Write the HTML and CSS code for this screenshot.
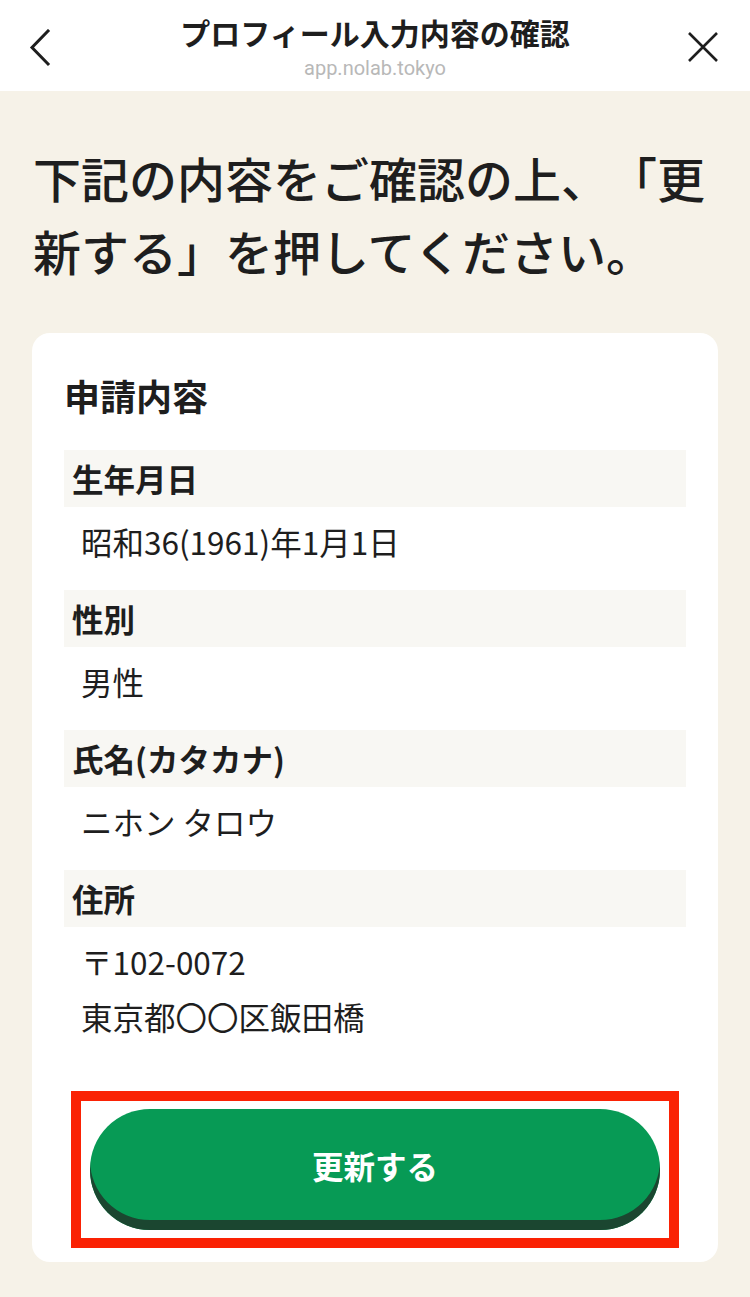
FILE: index.html
```html
<!DOCTYPE html>
<html lang="ja">
<head>
<meta charset="utf-8">
<title>プロフィール入力内容の確認</title>
<link rel="stylesheet" href="styles.css">
</head>
<body>
<header class="topbar">
  <button class="nav-btn back" aria-label="戻る">
    <svg width="24" height="38" viewBox="0 0 24 38"><polyline points="19,2 3,18.5 19,35" fill="none" stroke="#1e1e1e" stroke-width="3" stroke-linecap="square"/></svg>
  </button>
  <div class="topbar-text">
    <div class="topbar-title">プロフィール入力内容の確認</div>
    <div class="topbar-url">app.nolab.tokyo</div>
  </div>
  <button class="nav-btn close" aria-label="閉じる">
    <svg width="32" height="32" viewBox="0 0 32 32"><path d="M2 2 L30 30 M30 2 L2 30" fill="none" stroke="#1e1e1e" stroke-width="2.6"/></svg>
  </button>
</header>
<main class="page">
  <h1 class="lead">下記の内容をご確認の上、「更新する」を押してください。</h1>
  <section class="card">
    <h2 class="card-title">申請内容</h2>
    <dl class="fields">
      <dt class="field-label">生年月日</dt>
      <dd class="field-value">昭和36(1961)年1月1日</dd>
      <dt class="field-label">性別</dt>
      <dd class="field-value">男性</dd>
      <dt class="field-label">氏名(カタカナ)</dt>
      <dd class="field-value">ニホン タロウ</dd>
      <dt class="field-label">住所</dt>
      <dd class="field-value">〒102-0072<br>東京都〇〇区飯田橋</dd>
    </dl>
    <div class="highlight">
      <button class="submit">更新する</button>
    </div>
  </section>
</main>
</body>
</html>
```
FILE: styles.css
```css
* { box-sizing: border-box; }
html, body { margin: 0; padding: 0; }
body {
  font-family: "Noto Sans CJK JP", "Noto Sans", sans-serif;
  background: #f6f2e8;
  color: #1e1e1e;
  width: 750px;
  min-height: 1297px;
  text-spacing-trim: space-all;
}
.topbar {
  height: 91px;
  background: #ffffff;
  display: grid;
  grid-template-columns: 90px 1fr 90px;
  align-items: start;
}
.nav-btn {
  border: 0;
  background: none;
  padding: 0;
  display: flex;
}
.back { margin: 29px 0 0 29px; }
.close { margin: 31px 0 0 27px; }
.topbar-text {
  text-align: center;
  padding-top: 10px;
}
.topbar-title {
  font-size: 30px;
  font-weight: 700;
  line-height: 44px;
  color: #1e1e1e;
}
.topbar-url {
  font-family: Roboto, "Liberation Sans", sans-serif;
  font-size: 20px;
  line-height: 28px;
  color: #b8b8b8;
}
.page {
  padding: 50px 32px 37px;
}
.lead {
  margin: 0 0 46px 1px;
  font-size: 48px;
  font-weight: 500;
  line-height: 73px;
  color: #1e1e1e;
}
.card {
  background: #ffffff;
  border-radius: 18px;
  padding: 36px 32px 14px;
}
.card-title {
  margin: 0 0 29px 0;
  font-size: 36px;
  font-weight: 700;
  line-height: 52px;
}
.fields { margin: 0; }
.field-label {
  background: #f8f7f3;
  height: 57px;
  line-height: 57px;
  padding-left: 8px;
  font-size: 31.5px;
  font-weight: 700;
}
.field-value {
  margin: 0;
  padding: 7px 17px 21px;
  font-size: 31.5px;
  line-height: 55px;
}
.highlight {
  margin: 26px 7px 0;
  border: 10px solid #fa2204;
  padding: 8px 9px;
}
.submit {
  display: block;
  width: 100%;
  height: 121px;
  border: 0;
  border-radius: 60px;
  background: #079a55;
  box-shadow: inset 0 -10px 0 #1b4630;
  color: #ffffff;
  font-family: "Noto Sans CJK JP", "Noto Sans", sans-serif;
  font-size: 31.5px;
  font-weight: 700;
  padding: 0 0 10px;
}
```
